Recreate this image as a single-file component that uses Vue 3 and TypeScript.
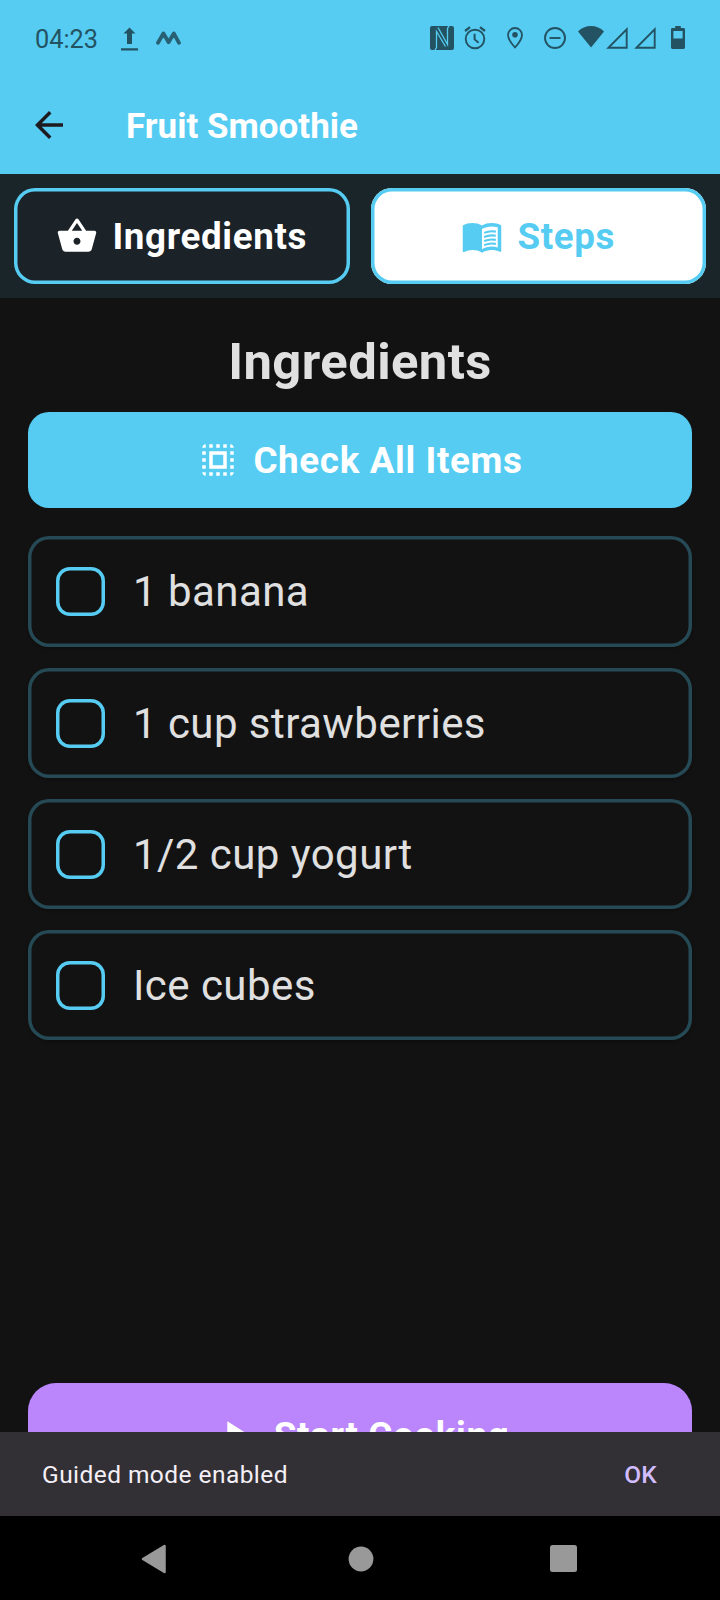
<script setup lang="ts">
import { ref } from 'vue'

interface Ingredient {
  name: string
  checked: boolean
}

const items = ref<Ingredient[]>([
  { name: '1 banana', checked: false },
  { name: '1 cup strawberries', checked: false },
  { name: '1/2 cup yogurt', checked: false },
  { name: 'Ice cubes', checked: false },
])

function checkAll() {
  items.value.forEach((i) => (i.checked = true))
}
</script>

<template>
  <div class="screen">
    <header class="top">
      <div class="status">
        <span class="time">04:23</span>
        <svg class="upload" width="17" height="24" viewBox="0 0 17 24"><path d="M8.5 0.5 14.5 6.5H11V17H6V6.5H2.5ZM0 21.3H17V23.5H0Z" fill="currentColor" /></svg>
        <svg class="wave" width="26" height="16" viewBox="0 0 26 16"><path d="M2 12.8 7.4 3.4 12.6 12.2 17.8 3.4 23 12.8" fill="none" stroke="currentColor" stroke-width="3.8" stroke-linecap="round" stroke-linejoin="round" /></svg>
        <span class="spacer"></span>
        <svg class="nfc" width="24" height="24" viewBox="0 0 24 24"><rect width="24" height="24" rx="2" fill="currentColor" /><path d="M5 24 6.500 21.500V5.500L15.500 20.500M19 0 17.500 2.500V18.500L8 1.500" fill="none" class="cut" /></svg>
        <svg class="alarm" width="22" height="24" viewBox="0 0 22 24" fill="none" stroke="currentColor"><circle cx="11" cy="13" r="9.3" stroke-width="1.9" /><path d="M10.600 7.800V13.400L14.600 16.800" stroke-width="2" /><path d="M1 5 6 1.200M21 5 16 1.200" stroke-width="2.200" /></svg>
        <svg class="pin" width="16" height="22" viewBox="0 0 16 22"><path d="M8 1C4.100 1 1 4.100 1 7.900 1 12.700 8 20.500 8 20.500S15 12.700 15 7.900C15 4.100 11.900 1 8 1Z" fill="none" stroke="currentColor" stroke-width="1.800" /><circle cx="8" cy="7.700" r="2.800" fill="currentColor" /></svg>
        <svg class="dnd" width="22" height="22" viewBox="0 0 22 22" fill="none" stroke="currentColor" stroke-width="1.900"><circle cx="11" cy="11" r="10" /><path d="M5.500 11H16.500" /></svg>
        <svg class="wifi" width="26" height="22" viewBox="0 0 26 22"><path d="M13 21.500 0 5.400C3.500 2 8 0 13 0S22.500 2 26 5.400Z" fill="currentColor" /></svg>
        <svg class="sig" width="22" height="22" viewBox="0 0 22 22"><path d="M2.400 20.800H20.700V2.400Z" fill="none" stroke="currentColor" stroke-width="1.900" /></svg>
        <svg class="sig second" width="22" height="22" viewBox="0 0 22 22"><path d="M2.400 20.800H20.700V2.400Z" fill="none" stroke="currentColor" stroke-width="1.900" /></svg>
        <svg class="battery" width="14" height="23" viewBox="0 0 14 23"><path fill-rule="evenodd" d="M4.200 0H9.800V2H12.600Q14 2 14 3.400V21.600Q14 23 12.600 23H1.400Q0 23 0 21.600V3.400Q0 2 1.400 2H4.200ZM2.400 5V12.500H11.600V5Z" fill="currentColor" /></svg>
      </div>
      <div class="appbar">
        <svg width="42" height="42" viewBox="0 0 24 24" fill="#1d1b20"><path d="M20 11H7.830l5.590-5.590L12 4l-8 8 8 8 1.410-1.410L7.830 13H20v-2z" /></svg>
        <h1>Fruit Smoothie</h1>
      </div>
    </header>

    <nav class="tabs">
      <button class="tab">
        <svg width="42" height="42" viewBox="0 0 24 24" fill="currentColor"><path d="M17.210 9l-4.380-6.560c-.19-.28-.51-.42-.83-.42-.32 0-.64.14-.83.43L6.790 9H2c-.55 0-1 .45-1 1 0 .09.01.18.04.27l2.540 9.270c.23.84 1 1.460 1.920 1.460h13c.92 0 1.690-.62 1.930-1.460l2.540-9.270L23 10c0-.55-.45-1-1-1h-4.790zM9 9l3-4.400L15 9H9zm3 8c-1.100 0-2-.9-2-2s.9-2 2-2 2 .9 2 2-.9 2-2 2z" /></svg>
        <span>Ingredients</span>
      </button>
      <button class="tab light">
        <svg width="42" height="42" viewBox="0 0 24 24" fill="currentColor"><path d="M21 5c-1.110-.35-2.330-.5-3.500-.5-1.950 0-4.050.4-5.500 1.500-1.450-1.100-3.550-1.500-5.500-1.500S2.450 4.900 1 6v14.650c0 .25.25.5.5.5.1 0 .15-.05.25-.05C3.100 20.450 5.050 20 6.500 20c1.950 0 4.050.4 5.500 1.500 1.350-.85 3.800-1.500 5.500-1.500 1.650 0 3.350.3 4.750 1.050.1.05.15.05.25.05.25 0 .5-.25.5-.5V6c-.6-.45-1.250-.75-2-1zm0 13.500c-1.100-.35-2.300-.5-3.500-.5-1.700 0-4.150.65-5.500 1.500V8c1.350-.85 3.800-1.500 5.500-1.500 1.200 0 2.400.15 3.500.5v11.500z" /><path d="M13.200 10.200Q16.500 8.800 19.900 9.500M13.200 12.600Q16.500 11.200 19.900 11.900M13.200 14.900Q16.500 13.500 19.900 14.200M13.200 17.200Q16.500 15.800 19.900 16.500" fill="none" stroke="currentColor" stroke-width="1.200" /></svg>
        <span>Steps</span>
      </button>
    </nav>

    <main class="content">
      <h2>Ingredients</h2>
      <button class="check-all" @click="checkAll">
        <svg width="42" height="42" viewBox="0 0 24 24" fill="currentColor"><path d="M3 5h2V3c-1.100 0-2 .9-2 2zm0 8h2v-2H3v2zm4 8h2v-2H7v2zM3 9h2V7H3v2zm10-6h-2v2h2V3zm6 0v2h2c0-1.100-.9-2-2-2zM5 21v-2H3c0 1.100.9 2 2 2zm-2-4h2v-2H3v2zM9 3H7v2h2V3zm2 18h2v-2h-2v2zm8-8h2v-2h-2v2zm0 8c1.100 0 2-.9 2-2h-2v2zm0-12h2V7h-2v2zm0 8h2v-2h-2v2zm-4 4h2v-2h-2v2zm0-16h2V3h-2v2zM7 17h10V7H7v10zm2-8h6v6H9V9z" /></svg>
        <span>Check All Items</span>
      </button>
      <ul class="list">
        <li v-for="item in items" :key="item.name" class="item" @click="item.checked = !item.checked">
          <span class="box" :class="{ on: item.checked }"></span>
          <span class="name">{{ item.name }}</span>
        </li>
      </ul>
      <button class="start">
        <svg width="49" height="49" viewBox="0 0 24 24" fill="currentColor"><path d="M8 5v14l11-7z" /></svg>
        <span>Start Cooking</span>
      </button>
    </main>

    <div class="snackbar">
      <span class="msg">Guided mode enabled</span>
      <span class="ok">OK</span>
    </div>

    <footer class="sysnav">
      <svg width="26" height="30" viewBox="0 0 26 30"><path d="M23.500 2V28L2 15Z" fill="#999" stroke="#999" stroke-width="2.500" stroke-linejoin="round" /></svg>
      <svg class="home" width="26" height="26" viewBox="0 0 26 26"><circle cx="13" cy="13" r="12.400" fill="#999" /></svg>
      <svg width="27" height="27" viewBox="0 0 27 27"><rect width="27" height="27" rx="2.500" fill="#999" /></svg>
    </footer>
  </div>
</template>

<style>
body {
  background: #121212;
}
</style>

<style scoped>
.screen {
  width: 720px;
  height: 1600px;
  display: flex;
  flex-direction: column;
  overflow: hidden;
  background: #121212;
  font-family: Roboto, sans-serif;
}
button {
  border: 0;
  padding: 0;
  font: inherit;
}
svg {
  display: block;
  flex: none;
}
.top {
  height: 174px;
  flex: none;
  background: #56ccf2;
}
.status {
  height: 76px;
  box-sizing: border-box;
  padding: 26px 35px 0 35px;
  display: flex;
  align-items: flex-start;
  color: #235363;
}
.time {
  width: 86px;
  font-size: 25.3px;
  line-height: 27px;
}
.upload { margin-top: 1px; }
.wave { margin: 4px 0 0 18px; opacity: 0.88; }
.spacer { flex: 1; }
.cut { stroke: #56ccf2; stroke-width: 1.3; }
.alarm { margin-left: 10px; }
.pin { margin: 1px 0 0 21px; }
.dnd { margin: 1px 0 0 21px; }
.wifi { margin: 0 0 0 12px; }
.sig { margin: 1px 0 0 2px; }
.second { margin-left: 6px; }
.battery { margin-left: 15px; }
.appbar {
  height: 98px;
  padding-left: 28px;
  display: flex;
  align-items: center;
}
h1 {
  margin: 4px 0 0 56px;
  font-size: 35px;
  font-weight: 700;
  line-height: 44px;
  color: #fff;
}
.tabs {
  height: 124px;
  flex: none;
  box-sizing: border-box;
  padding: 14px;
  display: flex;
  gap: 21px;
  background: #192529;
}
.tab {
  flex: 1;
  display: flex;
  align-items: center;
  justify-content: center;
  gap: 14px;
  border-radius: 21px;
  box-shadow: inset 0 0 0 3.5px #56ccf2;
  background: #1b2228;
  color: #fff;
}
.tab,
.check-all,
.start {
  font-size: 36.75px;
  font-weight: 700;
  letter-spacing: 0.65px;
}
.light {
  background: #fff;
  color: #56ccf2;
}
.content {
  flex: none;
  height: 1134px;
  padding: 0 28px;
  display: flex;
  flex-direction: column;
  overflow: hidden;
}
h2 {
  margin: 34px 0 20px;
  font-size: 50.75px;
  line-height: 60px;
  font-weight: 700;
  letter-spacing: 0.44px;
  text-align: center;
  color: #e0e0e0;
}
.check-all {
  height: 96px;
  flex: none;
  display: flex;
  align-items: center;
  justify-content: center;
  gap: 14px;
  border-radius: 21px;
  background: #56ccf2;
  color: #fff;
}
.list {
  margin: 28.4px 0 0;
  padding: 0;
  height: 846.6px;
  flex: none;
  list-style: none;
}
.item {
  height: 110.25px;
  margin-bottom: 21px;
  box-sizing: border-box;
  padding: 0.8px 0 0 28px;
  display: flex;
  align-items: center;
  gap: 28px;
  border-radius: 21px;
  box-shadow: inset 0 0 0 3.5px #264a55, 0 2px 3px rgba(0, 0, 0, 0.2);
}
.box {
  width: 49px;
  height: 49px;
  border-radius: 14px;
  box-shadow: inset 0 0 0 3.5px #56ccf2;
}
.on {
  background: #56ccf2;
}
.name {
  font-size: 42px;
  letter-spacing: 0.45px;
  color: #e0e0e0;
}
.start {
  height: 105px;
  flex: none;
  display: flex;
  align-items: center;
  justify-content: center;
  gap: 14px;
  border-radius: 28px;
  background: #bb86fc;
  color: #fff;
}
.snackbar {
  height: 84px;
  flex: none;
  box-sizing: border-box;
  padding: 0 63px 0 42px;
  display: flex;
  align-items: center;
  justify-content: space-between;
  background: #322f35;
  font-size: 24.5px;
}
.msg {
  color: #f5eff7;
  letter-spacing: 0.44px;
}
.ok {
  color: #d0bcff;
  font-weight: 500;
  letter-spacing: 0.17px;
}
.sysnav {
  height: 84px;
  flex: none;
  box-sizing: border-box;
  padding: 1px 143px 0 141px;
  display: flex;
  align-items: center;
  justify-content: space-between;
  background: #000;
}
.home {
  margin-left: 4px;
}
</style>
